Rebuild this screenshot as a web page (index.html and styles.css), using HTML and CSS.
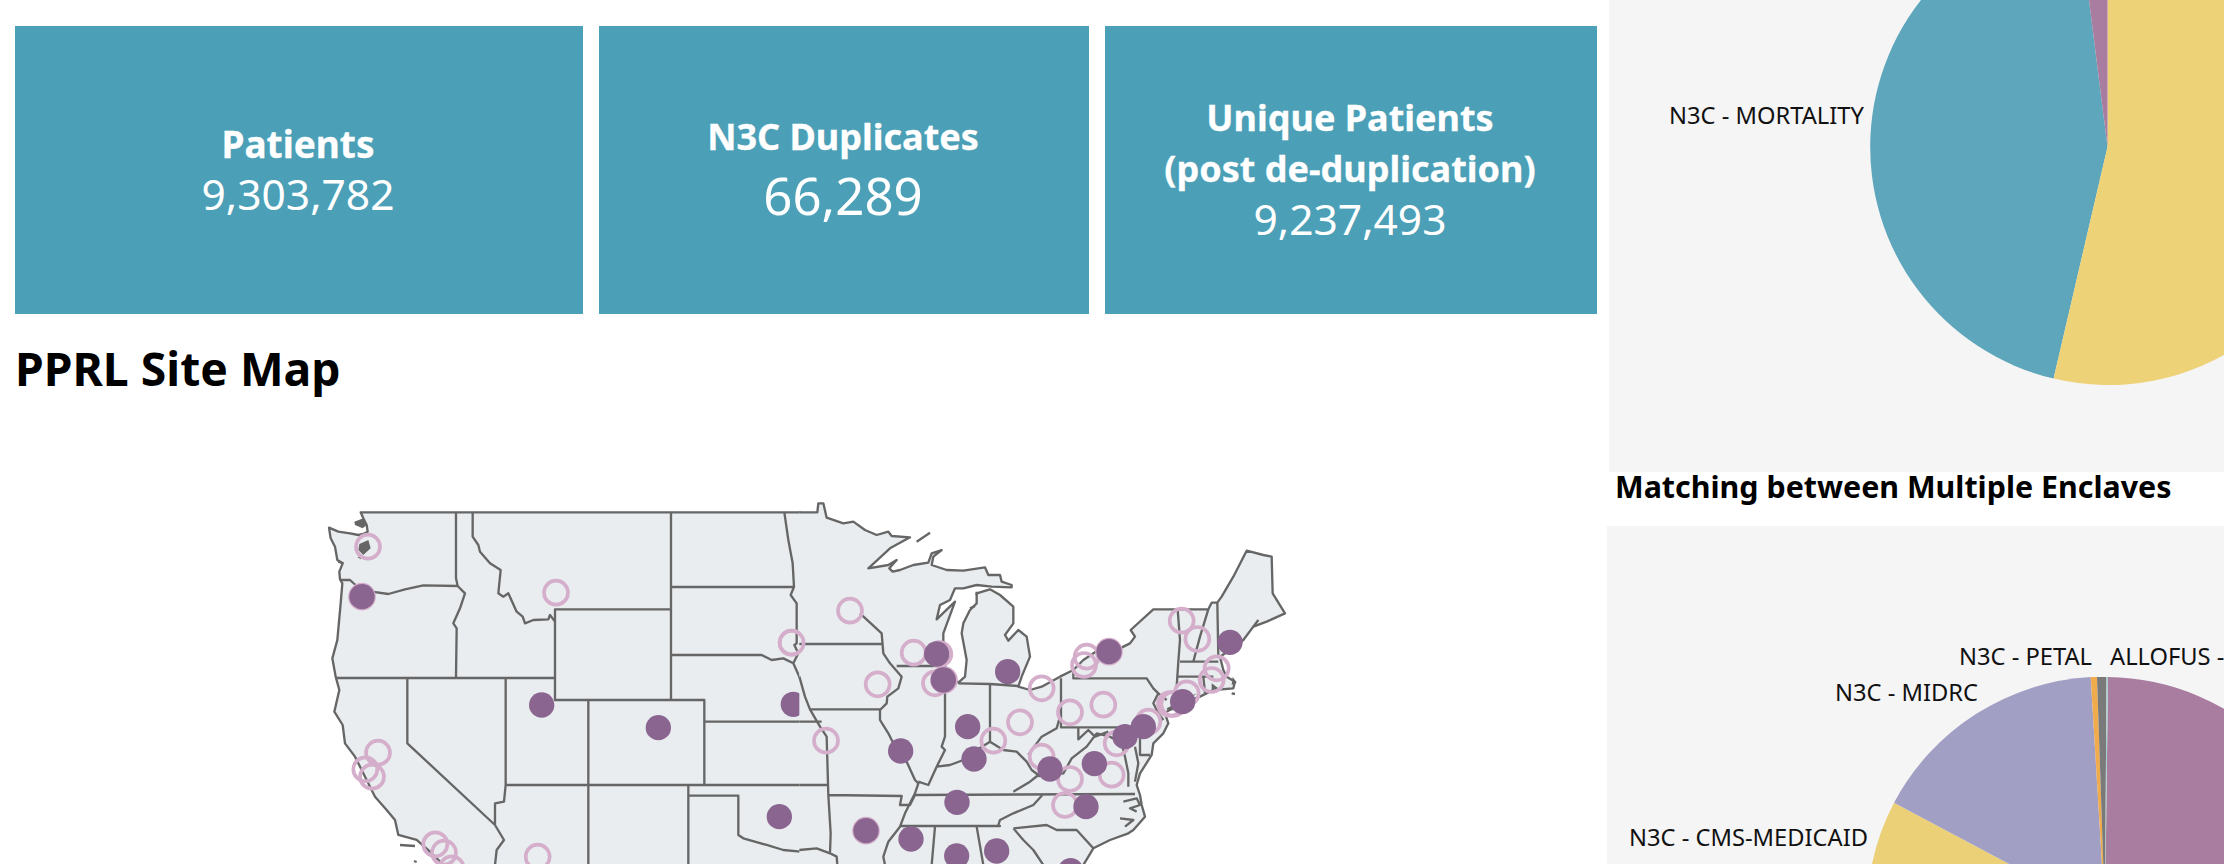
FILE: index.html
```html
<!DOCTYPE html>
<html lang="en">
<head>
<meta charset="utf-8">
<title>PPRL Dashboard</title>
<link rel="stylesheet" href="styles.css">
</head>
<body>
<div class="page">
  <main class="left">
    <section class="cards">
      <div class="card card-a">
        <div class="card-title">Patients</div>
        <div class="card-num">9,303,782</div>
      </div>
      <div class="card card-b">
        <div class="card-title">N3C Duplicates</div>
        <div class="card-num card-num-big">66,289</div>
      </div>
      <div class="card card-c">
        <div class="card-title">Unique Patients<br>(post de-duplication)</div>
        <div class="card-num">9,237,493</div>
      </div>
    </section>
    <h1 class="map-title">PPRL Site Map</h1>
    <svg class="map" width="1020" height="384" viewBox="0 0 1020 384" role="img" aria-label="US site map">
      <g transform="scale(.33333)">
        <path class="land" d="M1502 97L182 97L190 115L200 135L203 155L190 162L175 165L150 160L115 155L87 143L92 175L105 200L112 240L128 250L118 275L120 298L127 310L122 370L112 480L97 535L107 590L118 630L103 695L128 735L135 790L165 830L185 870L225 950L260 990L285 1020L295 1065L350 1080L390 1115L430 1155L1502 1155Z"/>
        <path class="line" d="M1502 97L182 97L190 115L200 135L203 155L190 162L175 165L150 160L115 155L87 143L92 175L105 200L112 240L128 250L118 275L120 298L127 310L122 370L112 480L97 535L107 590L118 630L103 695L128 735L135 790L165 830L185 870L225 950L260 990L285 1020L295 1065L350 1080L390 1115L430 1155"/>
        <path class="line" d="M468 97V295L473 318L495 340L480 385L460 430L470 445L468 592M123 300L150 300L170 318L215 335L265 342L315 328L370 316L473 318M108 594H765M518 97V170L535 195L540 215L570 250L602 270L595 340L610 350L625 340L650 395L668 410L675 430L700 420L745 418L750 405L765 425M765 388H1113V660H765ZM1113 97V388M1113 321H1482M1113 525H1385L1415 540L1450 535L1480 550L1498 590M865 660H1213V915H865ZM1213 725H1502M617 594V915H865M322 594V790L585 1035M617 915L612 965L585 970L585 1035L612 1080L590 1110L585 1155M865 915V1155M865 915H1502M1165 915V1155M1165 947H1315V1065L1330 1075L1400 1095L1450 1110L1502 1115M1453 97L1465 180L1478 250L1482 321L1472 345L1490 370L1490 490L1483 495L1495 520L1480 550"/>
        <path class="ink" d="M163 125L190 115L200 135L188 145L165 135ZM178 192L205 180L212 205L190 225L175 210ZM172 232L185 228L183 238Z"/>
        <path class="line" d="M300 1095L345 1098M342 1143L350 1146M115 245L130 250"/>
        <circle class="ring" cx="204" cy="200"/><circle class="ring" cx="768" cy="338"/><circle class="ring" cx="1475" cy="488"/><circle class="ring" cx="234" cy="818"/><circle class="ring" cx="196" cy="868"/><circle class="ring" cx="216" cy="890"/><circle class="ring" cx="406" cy="1093"/><circle class="ring" cx="432" cy="1118"/><circle class="ring" cx="455" cy="1165"/><circle class="ring" cx="713" cy="1130"/>
        <circle class="ring" cx="186" cy="350"/>
        <circle class="dot" cx="186" cy="350"/><circle class="dot" cx="725" cy="675"/><circle class="dot" cx="1075" cy="743"/><circle class="dot" cx="1480" cy="673"/><circle class="dot" cx="1438" cy="1010"/>
      </g>
      <g transform="translate(500) scale(.33333)">
        <path class="land" d="M-2 97L52 97L55 70L70 70L80 113L130 130L160 125L195 150L230 165L265 155L275 168L330 172L270 205L205 265L265 255L290 240L268 265L278 275L300 270L340 255L385 248L395 220L425 210L400 230L395 255L440 270L490 272L555 262L565 285L600 285L605 305L635 315L635 322L575 320L530 315L490 325L465 325L450 360L420 375L410 418L465 365L430 460L430 490L425 545L465 600L475 608L495 590L500 540L485 460L490 430L510 390L530 370L530 340L570 328L600 345L640 380L640 430L615 465L625 482L655 450L680 470L690 530L665 590L655 620L690 630L725 620L780 590L820 570L850 540L895 510L960 505L990 490L1005 470L992 450L1060 388L1225 388L1235 368L1252 368L1265 350L1300 290L1340 212L1390 225L1415 230L1418 340L1455 400L1400 425L1360 440L1330 480L1290 510L1260 530L1270 570L1280 590L1305 605L1300 625L1240 630L1200 650L1120 680L1095 700L1105 730L1090 760L1060 790L1055 825L1020 880L1010 915L1020 945L1025 975L1035 1010L1000 1050L985 1060L930 1080L880 1105L850 1155L-2 1155Z"/>
        <path class="line" d="M-2 97L52 97L55 70L70 70L80 113L130 130L160 125L195 150L230 165L265 155L275 168L330 172L270 205L205 265L265 255L290 240L268 265L278 275L300 270L340 255L385 248L395 220L425 210L400 230L395 255L440 270L490 272L555 262L565 285L600 285L605 305L635 315L635 322L575 320L530 315L490 325L465 325L450 360L420 375L410 418L465 365L430 460L430 490L425 545L465 600L475 608L495 590L500 540L485 460L490 430L510 390L530 370L530 340L570 328L600 345L640 380L640 430L615 465L625 482L655 450L680 470L690 530L665 590L655 620L690 630L725 620L780 590L820 570L850 540L895 510L960 505L990 490L1005 470L992 450L1060 388L1225 388L1235 368L1252 368L1265 350L1300 290L1340 212L1390 225L1415 230L1418 340L1455 400L1400 425L1360 440L1330 480L1290 510L1260 530L1270 570L1280 590L1305 605L1300 625L1240 630L1200 650L1120 680L1095 700L1105 730L1090 760L1060 790L1055 825L1020 880L1010 915L1020 945L1025 975L1035 1010L1000 1050L985 1060L930 1080L880 1105L850 1155"/>
        <path class="line" d="M-2 492H248M180 400L245 460L250 520L270 550L305 590L295 625L262 650L260 670L240 690L240 720L265 760L280 790L320 845L345 900L355 910L345 940L315 1000L300 1040L265 1085L250 1130L255 1155M290 558H425M-2 590L15 650L30 688L60 740L80 770L85 945L92 1060L90 1120M30 688H240M-2 725H65M-2 915H82M85 945L305 948L300 975L330 975L345 945L1005 942M-2 1110L50 1105L90 1120L110 1130L112 1155M300 1038H600L595 1035L600 1020L640 1000L700 975L730 942M355 905L385 915L410 860L450 855L490 840L530 810L570 785L610 810L650 815L680 845L695 870L715 885L690 905L640 935M435 610V770L425 800L435 810L410 860M475 610L570 612L655 618M570 612V790M783 595V742H1005M820 570V595H1040L1060 625L1075 640L1060 670L1075 700L1090 720M783 700L770 745L725 770L710 790L685 825M835 745V778L865 750L885 770L925 755M715 888L790 880L815 835L860 800L890 760L930 770L965 790L975 830L985 880L985 920M1020 745V825H1050M1005 800L1015 850L1005 905M1133 388L1140 480L1135 545L1130 620M1225 388L1200 470L1180 545M1252 368L1255 530M1140 545H1255M1135 590H1240M1210 590L1215 640M1075 640L1100 660M640 1045L740 1035L770 1050L830 1050L880 1105M640 1045L670 1080L700 1110L730 1155M530 1040L550 1155M405 1040L395 1155M350 185L390 158M1295 640L1305 642M970 965L1010 955L1020 975L990 985L1010 995M960 1015L1000 1020L975 1040M1360 440L1375 420M530 345V335M510 385L525 378"/>
        <path class="ink" d="M1100 685L1190 640L1145 680L1105 695ZM1235 610L1255 625L1235 632ZM1298 590L1310 608L1295 615Z"/>
        <circle class="ring" cx="150" cy="392"/><circle class="ring" cx="-25" cy="488"/><circle class="ring" cx="341" cy="518"/><circle class="ring" cx="233" cy="613"/><circle class="ring" cx="78" cy="782"/><circle class="ring" cx="405" cy="610"/><circle class="ring" cx="432" cy="600"/><circle class="ring" cx="418" cy="522"/><circle class="ring" cx="580" cy="782"/><circle class="ring" cx="660" cy="727"/><circle class="ring" cx="725" cy="625"/><circle class="ring" cx="810" cy="697"/><circle class="ring" cx="910" cy="674"/><circle class="ring" cx="860" cy="530"/><circle class="ring" cx="852" cy="555"/><circle class="ring" cx="927" cy="515"/><circle class="ring" cx="1145" cy="422"/><circle class="ring" cx="1192" cy="477"/><circle class="ring" cx="1250" cy="565"/><circle class="ring" cx="1235" cy="600"/><circle class="ring" cx="1160" cy="640"/><circle class="ring" cx="1110" cy="672"/><circle class="ring" cx="1120" cy="672"/><circle class="ring" cx="1045" cy="725"/><circle class="ring" cx="950" cy="790"/><circle class="ring" cx="725" cy="830"/><circle class="ring" cx="810" cy="897"/><circle class="ring" cx="935" cy="884"/><circle class="ring" cx="795" cy="975"/><circle class="ring" cx="198" cy="1052"/>
        <circle class="dot" cx="410" cy="522"/><circle class="dot" cx="430" cy="600"/><circle class="dot" cx="623" cy="575"/><circle class="dot" cx="927" cy="515"/><circle class="dot" cx="1290" cy="487"/><circle class="dot" cx="503" cy="740"/><circle class="dot" cx="302" cy="813"/><circle class="dot" cx="522" cy="837"/><circle class="dot" cx="750" cy="867"/><circle class="dot" cx="883" cy="851"/><circle class="dot" cx="975" cy="770"/><circle class="dot" cx="1030" cy="740"/><circle class="dot" cx="1148" cy="665"/><circle class="dot" cx="471" cy="967"/><circle class="dot" cx="858" cy="980"/><circle class="dot" cx="198" cy="1052"/><circle class="dot" cx="333" cy="1077"/><circle class="dot" cx="470" cy="1128"/><circle class="dot" cx="590" cy="1113"/><circle class="dot" cx="812" cy="1172"/>
      </g>
    </svg>
  </main>
  <aside class="right">
    <div class="panel panel-top">
      <svg class="pie" width="615" height="472" viewBox="1609 0 615 472" aria-hidden="true">
        <path class="s-blue" d="M2107.5 147L2053.6 378.6A238 238 0 0 1 2077.8 -89.1Z"/>
        <path class="s-yellow" d="M2107.5 147V-91A238 238 0 1 1 2053.6 378.6Z"/>
        <path class="s-mauve" d="M2107.5 147L2077.8 -89.1A238 238 0 0 1 2107.5 -91Z"/>
      </svg>
      <span class="lbl lbl-mort">N3C - MORTALITY</span>
    </div>
    <h2 class="side-title">Matching between Multiple Enclaves</h2>
    <div class="panel panel-bottom">
      <svg class="pie" width="617" height="338" viewBox="1607 526 617 338" aria-hidden="true">
        <path class="s-mauve" d="M2105 915L2108 677A238 238 0 0 1 2343 915A238 238 0 0 1 2105 1153Z"/>
        <path class="s-yellow2" d="M2105 915L1894 802.7A238 238 0 0 0 1867 915L2105 1153Z"/>
        <path class="s-lav" d="M2105 915L1894 802.7A238 238 0 0 1 2090.7 677Z"/>
        <path class="s-orange" d="M2105 915L2090.7 677L2097 677Z"/>
        <path class="s-gray" d="M2105 915L2097 677L2106.5 677Z"/>
        <path class="s-teal" d="M2105 915L2106.5 677L2108 677Z"/>
      </svg>
      <span class="lbl lbl-petal">N3C - PETAL</span>
      <span class="lbl lbl-allo">ALLOFUS -</span>
      <span class="lbl lbl-midrc">N3C - MIDRC</span>
      <span class="lbl lbl-cms">N3C - CMS-MEDICAID</span>
    </div>
  </aside>
</div>
</body>
</html>
```
FILE: styles.css
```css
html, body {
  margin: 0;
  padding: 0;
  height: 864px;
  overflow: hidden;
  background: #fff;
  font-family: "Noto Sans", "Open Sans", sans-serif;
  color: #000;
}
.page {
  display: grid;
  grid-template-columns: 1607px 617px;
  height: 864px;
  overflow: hidden;
}
.left {
  padding: 26px 0 0 15px;
  min-width: 0;
}
.cards {
  display: grid;
  grid-template-columns: 568px 490px 492px;
  column-gap: 16px;
  height: 288px;
}
.card {
  background: #4ba0b7;
  color: #fff;
  display: flex;
  flex-direction: column;
  align-items: center;
  justify-content: center;
  text-align: center;
  padding-right: 2px;
}
.card-b {
  padding-bottom: 1px;
}
.card-c {
  padding-bottom: 4px;
}
.card-title {
  font-size: 36px;
  font-weight: 700;
  line-height: 51px;
  -webkit-text-stroke: .3px #fff;
}
.card-a .card-title {
  font-size: 37px;
  margin-top: -2px;
}
.card-num {
  font-size: 42.5px;
  line-height: 52px;
  margin-top: -1px;
}
.card-num-big {
  font-size: 51px;
  line-height: 66px;
  margin-top: 0;
}
.map-title {
  margin: 25px 0 0;
  font-size: 46.3px;
  font-weight: 700;
  line-height: 60px;
}
.map {
  display: block;
  margin: 81px 0 0 285px;
}
.land {
  fill: #e9edef;
}
.line {
  fill: none;
  stroke: #666;
  stroke-width: 7;
  stroke-linejoin: round;
}
.ink {
  fill: #666;
}
.ring {
  r: 36px;
  fill: none;
  stroke: #d4aecb;
  stroke-width: 11;
}
.dot {
  r: 38px;
  fill: #8a6590;
}
.right {
  display: flex;
  flex-direction: column;
  min-width: 0;
}
.panel {
  position: relative;
  background: #f5f5f5;
  overflow: hidden;
}
.panel-top {
  height: 472px;
  margin-left: 2px;
}
.panel-bottom {
  height: 338px;
}
.pie {
  display: block;
}
.side-title {
  margin: 0;
  height: 54px;
  padding-left: 8px;
  font-size: 30.4px;
  font-weight: 700;
  line-height: 30px;
  white-space: nowrap;
}
.s-blue { fill: #5ea6bb; }
.s-yellow { fill: #eed277; }
.s-yellow2 { fill: #ebd077; }
.s-mauve { fill: #a97d9f; }
.s-lav { fill: #a29fc4; }
.s-orange { fill: #f0ab4d; }
.s-gray { fill: #7a7a7a; }
.s-teal { fill: #a8cfca; }
.lbl {
  position: absolute;
  font-size: 23.7px;
  line-height: 30px;
  white-space: nowrap;
  color: #111;
}
.lbl-mort { left: 60px; top: 100px; }
.lbl-petal { left: 352px; top: 115px; }
.lbl-allo { left: 503px; top: 115px; }
.lbl-midrc { left: 228px; top: 151px; }
.lbl-cms { left: 22px; top: 296px; }
```
